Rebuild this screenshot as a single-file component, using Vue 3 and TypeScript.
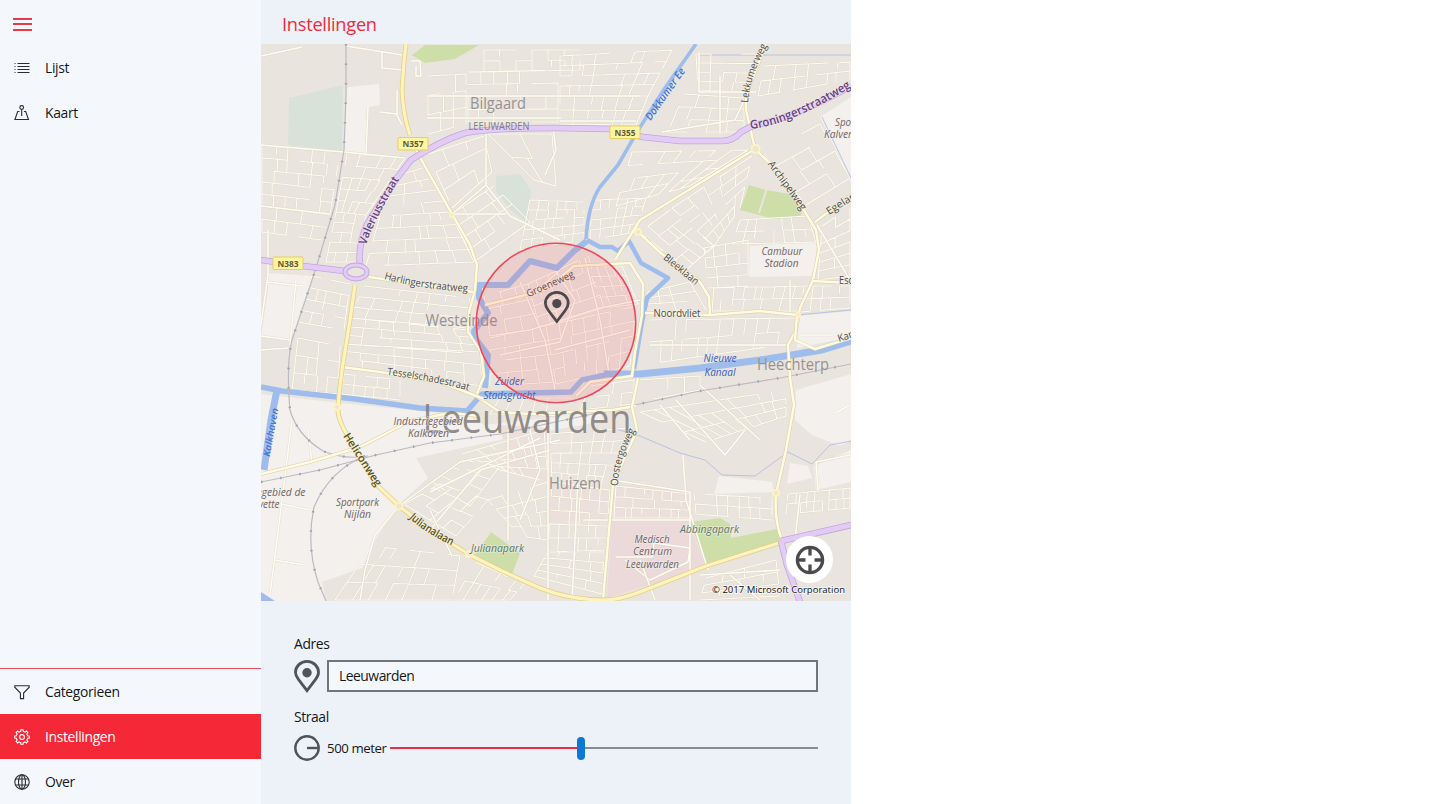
<script setup lang="ts">
type Point = [number, number]
type District = { corners: [Point, Point, Point, Point]; cols: number; rows: number }
type Label = { t: string; x: number; y: number; w: number; s: number; r?: number; c: string }
type CurvedLabel = { id: string; t: string; d: string; w: number; s: number; c: string }

const topItems = [
  { id: 'list', label: 'Lijst' },
  { id: 'map', label: 'Kaart' },
]
const bottomItems = [
  { id: 'filter', label: 'Categorieen' },
  { id: 'settings', label: 'Instellingen' },
  { id: 'globe', label: 'Over' },
]

const q = (a: number[], cols: number, rows: number): District => ({
  corners: [[a[0], a[1]], [a[2], a[3]], [a[4], a[5]], [a[6], a[7]]],
  cols,
  rows,
})

// Residential blocks: corners run clockwise from the top left.
const districts: District[] = [
  q([262, 146, 340, 152, 330, 215, 262, 206], 6, 5),
  q([262, 206, 330, 215, 322, 240, 262, 232], 5, 2),
  q([347, 154, 405, 158, 366, 215, 336, 212], 5, 5),
  q([336, 212, 366, 215, 356, 262, 326, 262], 3, 5),
  q([428, 76, 466, 74, 466, 124, 428, 134], 3, 3),
  q([468, 72, 558, 70, 558, 122, 468, 122], 7, 4),
  q([484, 50, 580, 50, 580, 70, 484, 72], 6, 2),
  q([560, 56, 672, 50, 648, 96, 560, 96], 9, 4),
  q([560, 96, 648, 96, 636, 125, 560, 124], 6, 2),
  q([696, 54, 756, 54, 745, 92, 698, 90], 4, 4),
  q([684, 94, 744, 98, 744, 132, 668, 132], 4, 3),
  q([764, 66, 850, 62, 850, 80, 758, 96], 8, 2),
  q([428, 154, 484, 136, 492, 172, 452, 208], 3, 3),
  q([396, 176, 422, 168, 450, 212, 382, 216], 3, 4),
  q([380, 216, 450, 212, 474, 262, 366, 266], 6, 4),
  q([452, 214, 494, 186, 530, 222, 474, 262], 4, 4),
  q([530, 200, 584, 202, 584, 240, 520, 250], 6, 5),
  q([488, 134, 552, 134, 556, 186, 534, 180], 2, 2),
  q([632, 152, 748, 150, 690, 186, 616, 206], 7, 4),
  q([592, 200, 646, 198, 636, 232, 590, 240], 6, 4),
  q([672, 208, 752, 156, 740, 208, 714, 246], 5, 5),
  q([640, 232, 670, 210, 714, 246, 686, 270], 4, 4),
  q([764, 154, 820, 124, 850, 178, 806, 205], 3, 4),
  q([740, 220, 808, 216, 816, 242, 732, 244], 8, 2),
  q([704, 248, 748, 240, 748, 286, 708, 288], 4, 4),
  q([822, 226, 850, 208, 850, 276, 818, 280], 2, 6),
  q([714, 288, 806, 286, 798, 311, 712, 311], 9, 2),
  q([650, 320, 794, 318, 788, 344, 648, 364], 12, 2),
  q([648, 292, 690, 282, 706, 310, 646, 310], 4, 3),
  q([804, 286, 850, 286, 850, 308, 800, 312], 5, 2),
  q([364, 286, 470, 298, 468, 328, 350, 318], 8, 3),
  q([350, 318, 468, 330, 480, 352, 344, 344], 8, 3),
  q([344, 344, 480, 354, 482, 386, 342, 366], 8, 3),
  q([312, 276, 350, 284, 344, 330, 298, 322], 4, 4),
  q([298, 338, 340, 346, 338, 394, 292, 390], 4, 3),
  q([344, 374, 400, 380, 400, 400, 341, 394], 5, 2),
  q([484, 296, 528, 284, 540, 328, 490, 336], 3, 3),
  q([528, 284, 588, 256, 604, 308, 540, 328], 6, 4),
  q([588, 266, 622, 266, 638, 304, 602, 308], 4, 4),
  q([490, 338, 546, 326, 556, 382, 490, 386], 4, 4),
  q([546, 326, 636, 306, 630, 366, 556, 384], 7, 4),
  q([500, 398, 572, 398, 574, 416, 490, 414], 6, 1),
  q([590, 386, 634, 380, 634, 404, 580, 410], 4, 2),
  q([638, 380, 700, 376, 700, 390, 638, 402], 4, 1),
  q([640, 412, 786, 390, 786, 416, 706, 442], 10, 3),
  q([432, 482, 462, 460, 500, 466, 470, 506], 3, 3),
  q([462, 454, 544, 430, 548, 482, 500, 470], 6, 4),
  q([404, 504, 440, 484, 488, 500, 456, 536], 4, 4),
  q([488, 500, 548, 482, 548, 540, 520, 536], 4, 4),
  q([550, 434, 628, 428, 610, 490, 552, 482], 7, 5),
  q([552, 482, 610, 490, 606, 550, 548, 552], 6, 5),
  q([548, 552, 604, 552, 602, 594, 534, 576], 4, 4),
  q([372, 546, 460, 556, 452, 600, 335, 600], 7, 3),
  q([476, 562, 524, 584, 510, 600, 454, 600], 6, 2),
  q([616, 486, 690, 494, 690, 518, 614, 518], 8, 3),
  q([694, 494, 772, 498, 772, 520, 696, 514], 7, 2),
  q([788, 494, 850, 488, 850, 508, 786, 514], 9, 2),
  q([706, 578, 776, 560, 780, 596, 700, 600], 4, 3),
]

const lerp = (a: Point, b: Point, t: number): Point => [a[0] + (b[0] - a[0]) * t, a[1] + (b[1] - a[1]) * t]

// Stable pseudo-random value in [0, 1) for a street segment.
function noise(a: number, b: number, c: number): number {
  const v = Math.sin(a * 12.9898 + b * 78.233 + c * 37.719) * 43758.5453
  return v - Math.floor(v)
}

function streets(d: District, seed: number): string {
  const [a, b, c, e] = d.corners
  const at = (u: number, v: number): string => {
    const [x, y] = lerp(lerp(a, b, u), lerp(e, c, u), v)
    return `${x.toFixed(1)} ${y.toFixed(1)}`
  }
  let out = ''
  for (let r = 0; r <= d.rows; r++) {
    const v = r / d.rows
    for (let k = 0; k < d.cols; k++) {
      if (noise(r, k, seed) > 0.16) out += `M${at(k / d.cols, v)}L${at((k + 1) / d.cols, v)}`
    }
  }
  for (let r = 0; r < d.rows; r++) {
    for (let k = 0; k <= d.cols; k++) {
      const n = noise(k + 40, r, seed)
      if (n < 0.3) continue
      const shift = k > 0 && k < d.cols ? (noise(k, r + 70, seed) - 0.5) * 0.5 : 0
      const u = (k + (n > 0.65 ? shift : 0)) / d.cols
      const end = n > 0.9 ? (r + 0.6) / d.rows : (r + 1) / d.rows
      out += `M${at(u, r / d.rows)}L${at(u, end)}`
    }
  }
  return out
}
const minorStreets = districts.map(streets).join('')

const lanes = [
  'M261 56L302 47M346 46L402 55M382 52V68L403 70M411 61H420L421 76H416V66M397 90V115L402 125M380 112L397 114M368 107L366 155',
  'M261 145L344 152L405 158M427 96H561M427 118H561M560 96H640M560 121H636M699 52V92H756M720 76V134M662 132L735 120L745 98',
  'M261 206L330 214M452 214L486 185L510 216L560 240M450 214H506M486 185V130M553 128L556 150L545 175',
  'M268 230V275L261 325M290 345L296 280M267 282L302 286M261 336L290 340M261 350L288 348',
  'M292 420L287 460L282 500L270 595M262 500L310 510M274 560L305 565M308 430L312 462',
  'M399 506L375 535L365 570L360 600M399 506L460 462L560 440M430 492L540 438M430 530L480 470L550 450',
  'M452 556L430 510M508 430V540M548 430V600M578 480L572 600M530 430L540 470L520 520',
  'M612 480L690 492V600M583 520H690M683 455L686 500L708 570M616 557H652L654 543L690 548L688 562L650 580L625 560M700 575L780 570',
  'M700 385L760 440M676 400L725 455L745 430M660 405L690 440M800 495L795 540L840 530M730 575L760 600M640 560L655 600',
  'M817 225L850 280M790 280V315M650 345H788M818 490L816 462L850 455M835 413L850 405M800 335H832',
  'M484 303L520 298L540 288L560 270M496 335L530 330L600 308L640 300M520 282L545 340L556 395M585 258L600 320L610 380M555 350L630 330M500 355L560 342L575 300L555 270',
]

const yellowRoads = [
  'M355 285L350 320L342 370L339 395L338 411C339 425 350 438 360 458L376 484L399 506L430 530L470 555L502 571L540 588Q570 600 605 600Q620 600 645 590L706 566L782 542',
  'M406 44L404 62L402 90Q403 115 410 135',
]
const paleRoads = [
  'M414 146L427 170L452 214L470 245L477 265L475 290L469 312L468 332L481 352L484 376L476 396L500 412L530 414L612 410L636 406',
  'M766 44L746 95V110L755 149L778 171L805 212L816 230L819 250L813 280L800 308L796 330L788 345L790 378L794 405L786 450L776 494Q774 520 782 540',
  'M755 149L640 220L615 260M851 195L815 222M638 232L662 254L700 282L709 297L710 314M645 313L710 315L760 311L797 315L795 340L815 349L851 338M813 281L851 283',
  'M369 277L473 292M342 367L380 372L440 382L484 399M638 378L632 407L637 430L613 484L603 600M485 305L545 290L574 266L630 263L643 284L642 315L635 352L632 376L590 382L576 396',
  'M261 474L310 462L360 447L410 421L450 413L480 416',
]

const railways = [
  'M346 44V95L344 150L335 205L316 268L292 340Q286 365 290 410Q297 435 323 451Q345 460 368 456',
  'M261 482L320 470L376 455L430 443L500 434L560 421L700 391L780 378L851 364',
  'M365 456Q330 470 314 507Q306 545 318 582L326 601',
]

const canals = [
  { d: 'M696 44L665 88L637 132L618 165L600 187Q588 205 586 239', w: 3.6 },
  { d: 'M587 240L600 247L612 247L618 251L629 241L641 263L668 278L647 298L642 322L634 369', w: 4.5 },
  { d: 'M587 241L574 251L557 268L530 261L508 285H479L479 298L488 313L474 331L475 338L488 355L485 388', w: 6 },
  { d: 'M261 387L282 391L355 399L420 408L467 411L482 394L571 392L582 380L605 375', w: 5.5 },
  { d: 'M604 374H640L700 368L760 360L822 350L851 341', w: 7 },
  { d: 'M277 390L271 420L264 470', w: 7 },
]

const labels: Label[] = [
  { t: 'Bilgaard', x: 498, y: 109, w: 56, s: 16, c: 'area' },
  { t: 'LEEUWARDEN', x: 499, y: 130, w: 61, s: 10, c: 'town' },
  { t: 'Westeinde', x: 461.5, y: 325.5, w: 72, s: 15.5, c: 'area' },
  { t: 'Heechterp', x: 793, y: 369.5, w: 72, s: 15.5, c: 'area' },
  { t: 'Huizem', x: 575, y: 489, w: 52, s: 16, c: 'area' },
  { t: 'Leeuwarden', x: 527, y: 433, w: 209, s: 40, c: 'city' },
  { t: 'Cambuur', x: 782, y: 254.5, w: 41, s: 10.3, c: 'place' },
  { t: 'Stadion', x: 781.5, y: 267, w: 34, s: 10.3, c: 'place' },
  { t: 'Nieuwe', x: 720, y: 362, w: 33, s: 10.3, c: 'water' },
  { t: 'Kanaal', x: 720, y: 375.5, w: 31, s: 10.3, c: 'water' },
  { t: 'Zuider', x: 509.5, y: 385, w: 29, s: 10.3, c: 'water' },
  { t: 'Stadsgracht', x: 509.5, y: 398.5, w: 52, s: 10.3, c: 'water' },
  { t: 'Industriegebied', x: 428, y: 424.5, w: 69, s: 10.3, c: 'place' },
  { t: 'Kalkoven', x: 428.5, y: 437, w: 41, s: 10.3, c: 'place' },
  { t: 'Sportpark', x: 357.5, y: 505.5, w: 43, s: 10.3, c: 'place' },
  { t: 'Nijlân', x: 357.5, y: 518, w: 27, s: 10.3, c: 'place' },
  { t: 'Julianapark', x: 497.5, y: 552, w: 53, s: 10.3, c: 'park' },
  { t: 'Abbingapark', x: 709.5, y: 533, w: 59, s: 10.3, c: 'park' },
  { t: 'Medisch', x: 652, y: 542.5, w: 35, s: 10.3, c: 'place' },
  { t: 'Centrum', x: 652.5, y: 555, w: 39, s: 10.3, c: 'place' },
  { t: 'Leeuwarden', x: 652.5, y: 567.5, w: 53, s: 10.3, c: 'place' },
  { t: 'Noordvliet', x: 677, y: 316.5, w: 47, s: 10.3, c: 'road' },
  { t: 'Dokkumer Ee', x: 668, y: 96, w: 61, s: 10.5, r: -55, c: 'water bold' },
  { t: 'Kalkhaven', x: 274, y: 433, w: 49, s: 9.5, r: -80, c: 'water bold' },
  { t: 'Archipelweg', x: 784.5, y: 187.5, w: 58, s: 10.3, r: 54, c: 'road' },
  { t: 'Bleeklaan', x: 679, y: 272, w: 42, s: 10.3, r: 39, c: 'road' },
  { t: 'Heliconweg', x: 359.5, y: 461.5, w: 61, s: 11, r: 57, c: 'highway' },
  { t: 'Groeneweg', x: 551.5, y: 287, w: 51, s: 10, r: -24, c: 'road' },
]
const edgeLabels: Label[] = [
  { t: 'egebied de', x: 256.5, y: 495.5, w: 49, s: 10.3, c: 'place' },
  { t: 'vette', x: 258.5, y: 508, w: 21, s: 10.3, c: 'place' },
  { t: 'Sportpark', x: 835, y: 125.5, w: 43, s: 10.3, c: 'place' },
  { t: 'Kalverdijkje', x: 824, y: 138, w: 52, s: 10.3, c: 'place' },
  { t: 'Egelantierstraat', x: 829, y: 215, w: 78, s: 10.3, r: -32, c: 'road' },
  { t: 'Escamplaan', x: 839, y: 284, w: 52, s: 10.3, c: 'road' },
  { t: 'Kanaalweg', x: 839, y: 342, w: 48, s: 10.3, r: -18, c: 'road' },
]
const curved: CurvedLabel[] = [
  { id: 'valerius', t: 'Valeriusstraat', d: 'M366 245Q374 220 400 178', w: 74, s: 11.5, c: 'motorway' },
  { id: 'groninger', t: 'Groningerstraatweg', d: 'M750.5 129Q792 125 858 83', w: 110, s: 12, c: 'motorway' },
  { id: 'lekkumer', t: 'Lekkumerweg', d: 'M748 103Q750 75 770 41', w: 61, s: 10.3, c: 'road' },
  { id: 'harlinger', t: 'Harlingerstraatweg', d: 'M384 279Q420 289 470 292', w: 85, s: 10.3, c: 'road' },
  { id: 'tessel', t: 'Tesselschadestraat', d: 'M387 375Q430 380 470 391', w: 83, s: 10.3, c: 'road' },
  { id: 'oostergo', t: 'Oostergoweg', d: 'M618 486Q618 460 637 427', w: 59, s: 10.3, c: 'road' },
  { id: 'juliana', t: 'Julianalaan', d: 'M409 518Q425 533 455 547', w: 51, s: 11, c: 'highway' },
]
const shields = [
  { t: 'N357', x: 398, y: 137.5 },
  { t: 'N355', x: 610, y: 126 },
  { t: 'N383', x: 273, y: 257 },
]

const radius = { text: '500 meter', fraction: 0.447 }
</script>

<template>
  <div class="app">
    <nav class="sidebar">
      <button class="menu" aria-label="Menu"><i></i><i></i><i></i></button>
      <a v-for="item in topItems" :key="item.id" class="item">
        <svg v-if="item.id === 'list'" class="icon" viewBox="0 0 16 16">
          <path d="M3.5 3.5H15.5M3.5 6.5H15.5M3.5 9.5H15.5M3.5 12.5H15.5" />
          <path d="M.5 3.5h1M.5 6.5h1M.5 9.5h1M.5 12.5h1" />
        </svg>
        <svg v-else class="icon" viewBox="0 0 16 16">
          <circle cx="7.7" cy="2.5" r="1.9" />
          <path d="M7.7 4.4V11M5.5 6.5H3.7L.9 14.5H14.5L11.7 6.5H9.9" />
        </svg>
        <span>{{ item.label }}</span>
      </a>
      <div class="spacer"></div>
      <div class="bottom">
        <a v-for="item in bottomItems" :key="item.id" class="item" :class="{ active: item.id === 'settings' }">
          <svg v-if="item.id === 'filter'" class="icon" viewBox="0 0 16 16">
            <path d="M.8 1.8H15.2V3.2L9.6 9V14.6H6.4V9L.8 3.2Z" />
          </svg>
          <svg v-else-if="item.id === 'settings'" class="icon" viewBox="0 0 16 16">
            <circle cx="8" cy="8" r="2.4" />
            <path d="M6.7 2.3L6.9.7H9.1L9.3 2.3L11.1 3.1L12.4 2.1L13.9 3.6L12.9 4.9L13.7 6.7L15.3 6.9V9.1L13.7 9.3L12.9 11.1L13.9 12.4L12.4 13.9L11.1 12.9L9.3 13.7L9.1 15.3H6.9L6.7 13.7L4.9 12.9L3.6 13.9L2.1 12.4L3.1 11.1L2.3 9.3L.7 9.1V6.9L2.3 6.7L3.1 4.9L2.1 3.6L3.6 2.1L4.9 3.1Z" />
          </svg>
          <svg v-else class="icon" viewBox="0 0 16 16">
            <circle cx="8" cy="8" r="7.2" />
            <ellipse cx="8" cy="8" rx="3.5" ry="7.2" />
            <path d="M8 .8V15.2M1.5 5H14.5M1.5 11H14.5" />
          </svg>
          <span>{{ item.label }}</span>
        </a>
      </div>
    </nav>

    <main class="main">
      <h1 class="title">Instellingen</h1>
      <div class="map">
        <svg class="map-canvas" viewBox="261 44 590 557">
          <rect x="261" y="44" width="590" height="557" fill="#e9e5de" />
          <g fill="#f3f0ed">
            <path d="M261 394L340 403L470 416L484 425L600 412L604 421L500 440L416 458L428 478L399 504L375 540L362 568L322 582L326 601H261Z" />
            <path d="M268 273L312 276L299 322L290 340L261 336L268 290Z" />
            <path d="M347 87L379 84L380 105L369 107L366 154L344 152Z" />
            <path d="M750 246L817 241L815 266L811 276L749 277Z" />
            <path d="M799 316L851 311V337L797 348Z" />
            <path d="M796 390L851 374V440L840 446L812 435L795 420Z" />
            <path d="M820 117L851 97V182Z" />
            <path d="M719 476L772 482L774 492L714 494Z" />
            <path d="M790 463L808 466L812 478L787 484ZM814 466L851 450V482L816 490Z" />
          </g>
          <path d="M289 98L343 85L342 151L288 145ZM496 176L520 174L531 190L528 224L510 210L496 192Z" fill="#d9e2d8" />
          <path d="M412 55L425 45H479L455 59L425 63ZM749 185L766 190L790 194L803 208L800 217L775 219L740 210ZM491 532L520 553L512 574L474 556ZM690 522L720 518L730 524L731 538L777 529L783 542L707 567Z" fill="#cddea9" />
          <path d="M767 188L759 213" stroke="#e9e5de" stroke-width="2" />
          <path d="M612 520L688 521L706 568L640 588L607 598Z" fill="#ecdada" />
          <path d="M500 425L548 428L550 482L508 470ZM616 484L690 490V520H615ZM550 482L608 490L606 520L548 522Z" fill="#ece0dc" />
          <g class="stroke">
            <path
              d="M700 55L851 55M797 315L851 310M822 117L852 180M612 428L640 436L680 453L705 460L722 475L755 476L788 452L812 464L830 445L851 441"
              stroke="#b8c2e2"
            />
            <path :d="minorStreets" stroke="#d9d1bd" stroke-width="1.8" opacity=".5" />
            <path :d="minorStreets" stroke="#fffcf0" stroke-width="1.05" />
            <g v-for="(d, i) in lanes" :key="'l' + i">
              <path :d="d" stroke="#d9d1bd" stroke-width="2.4" opacity=".6" />
              <path :d="d" stroke="#fffdf2" stroke-width="1.5" />
            </g>
            <path v-for="(c, i) in canals" :key="'c' + i" :d="c.d" stroke="#9ebdec" :stroke-width="c.w" />
            <path d="M261 592L275 601H261Z" fill="#9ebdec" />
            <g v-for="(d, i) in railways" :key="'r' + i">
              <path :d="d" stroke="#bcbac2" stroke-width="1.2" />
              <path :d="d" stroke="#a2a0ab" stroke-width="2.4" stroke-dasharray="1.5 18" />
            </g>
            <g v-for="(d, i) in paleRoads" :key="'p' + i">
              <path :d="d" stroke="#d9cfa9" stroke-width="3.5" />
              <path :d="d" stroke="#fffae0" stroke-width="2.5" />
            </g>
            <g v-for="(d, i) in yellowRoads" :key="'y' + i">
              <path :d="d" stroke="#e3cf8c" stroke-width="4.8" />
              <path :d="d" stroke="#fff3bd" stroke-width="3.2" />
            </g>
            <g v-for="w in [0, 1]" :key="w" :stroke="w ? '#e2ccf6' : '#c3a6dd'" :stroke-width="w ? 5 : 6.6">
              <path d="M360 264Q358 245 367 224L397 178L411 160Q440 141 465 133Q490 128 555 128L610 129L643 137L680 141L722 141Q733 141 741 132L754 125Q790 120 851 86" />
              <path d="M261 260L303 266L345 271M781 541L851 525M781 541L787 565L800 602" />
            </g>
            <ellipse cx="356" cy="272" rx="11" ry="7" fill="#e9e5de" stroke="#c3a6dd" stroke-width="5" />
            <ellipse cx="356" cy="272" rx="11" ry="7" stroke="#e2ccf6" stroke-width="3" />
            <g fill="#e9e5de" stroke="#fff3bd" stroke-width="2">
              <circle cx="755.5" cy="149" r="4" /><circle cx="399" cy="506" r="3.5" />
              <circle cx="337" cy="407" r="3" /><circle cx="776" cy="493" r="3" />
              <circle cx="452" cy="215" r="2" /><circle cx="798" cy="315" r="2" />
              <circle cx="638" cy="232" r="3" /><circle cx="469" cy="554" r="3" />
            </g>
          </g>

          <g v-for="s in shields" :key="s.t">
            <rect :x="s.x" :y="s.y" width="30" height="12.5" rx="1" fill="#fdf5a0" stroke="#e4cf62" />
            <text class="shield" :x="s.x + 15" :y="s.y + 9.8" textLength="21" lengthAdjust="spacingAndGlyphs">{{ s.t }}</text>
          </g>
          <defs>
            <path v-for="c in curved" :id="c.id" :key="c.id" :d="c.d" />
          </defs>
          <text
            v-for="(l, i) in labels"
            :key="'t' + i"
            :class="l.c"
            :font-size="l.s"
            :textLength="l.w"
            lengthAdjust="spacingAndGlyphs"
            text-anchor="middle"
            :transform="`translate(${l.x} ${l.y}) rotate(${l.r ?? 0})`"
          >{{ l.t }}</text>
          <text
            v-for="(l, i) in edgeLabels"
            :key="'e' + i"
            :class="l.c"
            :font-size="l.s"
            :textLength="l.w"
            lengthAdjust="spacingAndGlyphs"
            :transform="`translate(${l.x} ${l.y}) rotate(${l.r ?? 0})`"
          >{{ l.t }}</text>
          <text v-for="c in curved" :key="c.id" :class="c.c" :font-size="c.s">
            <textPath :href="'#' + c.id" :textLength="c.w" lengthAdjust="spacingAndGlyphs">{{ c.t }}</textPath>
          </text>

          <circle cx="556" cy="323" r="79.7" fill="#ff4055" fill-opacity=".13" stroke="#f0485a" stroke-width="1.6" />
          <g transform="translate(556.8 291)">
            <path d="M0 30.5L-8.4 19.5C-10.7 16.5-11.4 14.7-11.4 12.2A11.4 10.8 0 0 1 11.4 12.2C11.4 14.7 10.7 16.5 8.4 19.5Z" fill="none" stroke="#4c484b" stroke-width="2.8" />
            <circle cx="0" cy="12.6" r="4.6" fill="#4c484b" />
          </g>
          <text class="copyright" x="712" y="593" textLength="133" lengthAdjust="spacingAndGlyphs">© 2017 Microsoft Corporation</text>
        </svg>
        <button class="locate" aria-label="Locatie">
          <svg viewBox="0 0 30 30">
            <circle cx="15" cy="15" r="12.6" />
            <path d="M15 3V10.5M15 19.5V27M3 15H10.5M19.5 15H27" />
          </svg>
        </button>
      </div>

      <section class="form">
        <label class="caption">Adres</label>
        <div class="row address">
          <svg class="pin" viewBox="0 0 26 33">
            <path d="M13 30.6L4.6 19.6C2.2 16.5 1.5 14.8 1.5 12.4A11.5 11 0 0 1 24.5 12.4C24.5 14.8 23.8 16.5 21.4 19.6Z" />
            <circle cx="13" cy="12.7" r="4.7" />
          </svg>
          <div class="field">Leeuwarden</div>
        </div>
        <label class="caption second">Straal</label>
        <div class="row">
          <svg class="dial" viewBox="0 0 26 26">
            <circle cx="13" cy="13" r="11.7" />
            <path d="M13 13H24" />
          </svg>
          <span class="amount">{{ radius.text }}</span>
          <div class="slider">
            <div class="filled" :style="{ width: radius.fraction * 100 + '%' }"></div>
            <div class="thumb"></div>
            <div class="rest"></div>
          </div>
        </div>
      </section>
    </main>
  </div>
</template>

<style>
body { background: #fff; overflow: hidden; }
</style>

<style scoped>
.app {
  display: flex;
  width: 851px;
  height: 804px;
  font-family: "Open Sans", "Noto Sans", sans-serif;
  color: #14181c;
}
.sidebar {
  width: 261px;
  flex: none;
  display: flex;
  flex-direction: column;
  background: #f4f8fc;
}
.menu {
  width: 48px;
  height: 45px;
  padding: 18px 0 0 13px;
  border: 0;
  background: none;
  display: flex;
  flex-direction: column;
  gap: 3.5px;
}
.menu i { display: block; flex: none; width: 19px; height: 1.9px; background: #e6394b; }
.item {
  height: 45px;
  box-sizing: border-box;
  padding-left: 14px;
  display: flex;
  align-items: center;
  gap: 15px;
  font-size: 13.9px;
  letter-spacing: -0.35px;
}
.icon { width: 16px; height: 16px; fill: none; stroke: #292d31; stroke-width: 1.1; }
.active { background: #f42837; color: #fff; }
.active .icon { stroke: #fff; }
.spacer { flex: 1; }
.bottom { border-top: 1px solid #f0505e; }
.main { width: 590px; background: #edf1f8; }
.title {
  height: 44px;
  margin: 0;
  padding-left: 21px;
  box-sizing: border-box;
  line-height: 49px;
  font-size: 18.2px;
  font-weight: 400;
  letter-spacing: -0.25px;
  color: #ee2b3b;
}
.map { position: relative; height: 557px; }
.map-canvas { display: block; width: 590px; height: 557px; }
.stroke { fill: none; stroke-linejoin: round; }
.area { fill: #969292; }
.town { fill: #817d84; }
.city { fill: #807b79; fill-opacity: .85; }
.place, .park, .water { font-style: italic; }
.place { fill: #71646a; }
.park { fill: #5f7768; }
.water { fill: #3a5fc0; }
.bold { font-weight: 600; fill: #4273d6; }
.road { fill: #4f4b46; }
.highway { fill: #5c5118; font-weight: 600; }
.motorway { fill: #67417d; font-weight: 600; }
.place, .park, .road, .highway, .motorway { paint-order: stroke; stroke: rgba(244, 240, 234, .6); stroke-width: 1.5px; }
.shield { font-size: 9px; font-weight: 700; fill: #625b38; text-anchor: middle; }
.copyright { font-size: 9.8px; fill: #111; paint-order: stroke; stroke: rgba(255, 255, 255, .6); stroke-width: 2px; }
.locate {
  position: absolute;
  right: 18px;
  bottom: 18px;
  width: 47px;
  height: 47px;
  padding: 0;
  border: 0;
  border-radius: 50%;
  background: #fff;
  display: grid;
  place-items: center;
}
.locate svg { width: 30px; height: 30px; fill: none; stroke: #4a4a4c; stroke-width: 3.3; }
.form { padding: 33px 33px 0; font-size: 13.9px; letter-spacing: -0.4px; }
.caption { display: block; height: 20px; line-height: 20px; margin-bottom: 6px; }
.second { margin-top: 15px; margin-bottom: 8px; }
.row { display: flex; align-items: center; }
.address { height: 32px; }
.pin { width: 26px; height: 33px; margin-right: 7px; fill: none; stroke: #505358; stroke-width: 2.8; }
.pin circle { fill: #505358; stroke: none; }
.field {
  flex: 1;
  height: 32px;
  box-sizing: border-box;
  border: 2px solid #70757a;
  background: #f4f8fc;
  padding-left: 10px;
  line-height: 27px;
  letter-spacing: -0.5px;
}
.dial { width: 26px; height: 26px; margin-right: 7px; fill: none; stroke: #505358; stroke-width: 2.4; }
.amount { width: 63px; font-size: 13.2px; }
.slider { flex: 1; display: flex; align-items: center; }
.filled { height: 2px; background: #e92d42; box-sizing: border-box; margin-right: -4px; }
.thumb { width: 8px; height: 23px; border-radius: 4px; background: #0c78d4; flex: none; }
.rest { flex: 1; height: 2px; background: #878c93; }
</style>
